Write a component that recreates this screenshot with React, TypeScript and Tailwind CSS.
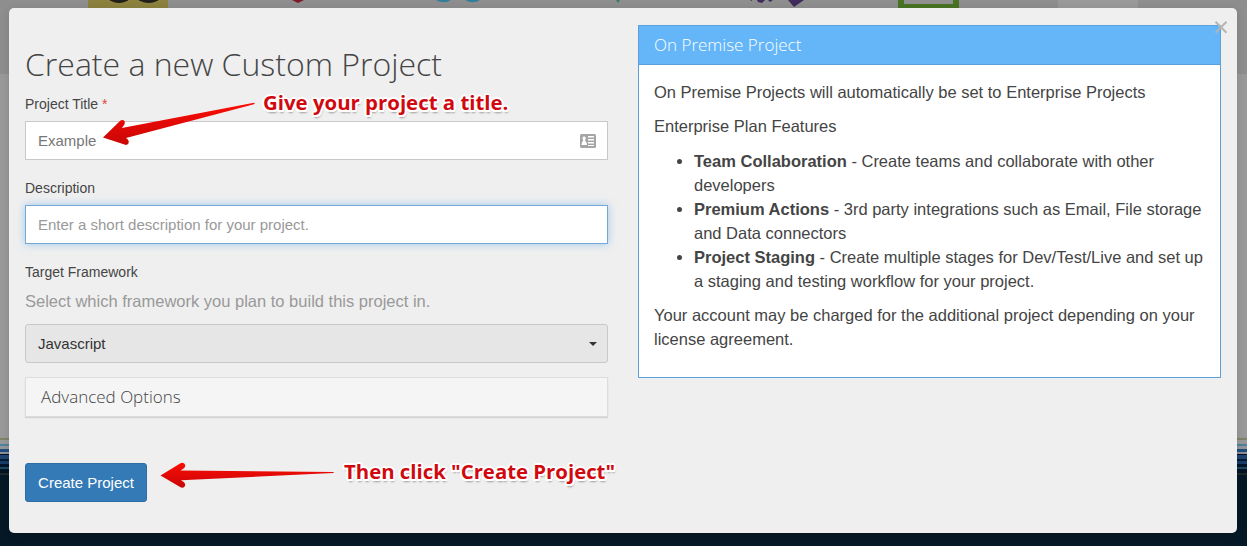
import React from "react";

const features = [
  { name: "Team Collaboration", lines: [" - Create teams and collaborate with other", "developers"] },
  { name: "Premium Actions", lines: [" - 3rd party integrations such as Email, File storage", "and Data connectors"] },
  { name: "Project Staging", lines: [" - Create multiple stages for Dev/Test/Live and set up", "a staging and testing workflow for your project."] },
];

const stripes = [
  "h-[2px] bg-[#7d8568]",
  "h-[4px] bg-[#97999a]",
  "h-[2px] bg-[#50819e]",
  "h-[3px] bg-[#93979b]",
  "h-[3px] bg-[#1f4e7d]",
  "h-[2px] bg-[#8b9197]",
  "h-[1px] bg-[#020d24]",
  "h-[4px] bg-[#1d4570]",
  "h-[2px] bg-[#031a33]",
  "h-[3px] bg-[#173d68]",
  "h-[3px] bg-[#03152b]",
  "h-[2px] bg-[#1b4a5c]",
  "h-[4px] bg-[#041424]",
  "h-[2px] bg-[#1c2b28]",
];

function Backdrop() {
  return (
    <div className="absolute inset-0 flex flex-col bg-[#051825]">
      <div className="h-[74px] bg-[#8e8e8e]" />
      <div className="h-[364px] bg-[#999999]" />
      {stripes.map((c, i) => (
        <div key={i} className={c} />
      ))}
      <svg className="absolute left-0 top-0" width="1247" height="8" viewBox="0 0 1247 8">
        <rect x="88" width="80" height="8" fill="#8c823d" />
        <path d="M110 0h18q-9 5-18 0zM139 0h19q-9 5-19 0z" fill="#22201c" stroke="#22201c" />
        <path d="M292 0h12l-6 3z" fill="#7c1a2b" />
        <path d="M436 0h15q-7 4.500-15 0zM465 0h15q-7 4.500-15 0z" fill="#307f9a" />
        <path d="M616 0h4l-2 3z" fill="#3d7c5d" />
        <path d="M750 0h2v1zM757 0h8l-3 3-4-1zM768 0h5l-3 2zM788 0h16l-10 7z" fill="#412a5c" />
        <path d="M898 0h61v8h-61z" fill="#487322" />
        <path d="M904 0h49v4h-49z" fill="#909090" />
        <rect x="1058" width="80" height="8" fill="#999" />
      </svg>
    </div>
  );
}

function Label({ children }: { children: React.ReactNode }) {
  return <div className="h-5 whitespace-nowrap text-[14px] leading-5 text-[#454545]">{children}</div>;
}

function Callout({ className, children }: { className: string; children: React.ReactNode }) {
  return (
    <div
      className={
        "absolute whitespace-nowrap font-['Open_Sans'] font-bold text-[#d1090f] [text-shadow:-2px_0_#fff,2px_0_#fff,0_-2px_#fff,0_2px_#fff,-1.5px_-1.5px_#fff,1.5px_-1.5px_#fff,-1.5px_1.5px_#fff,1.5px_1.5px_#fff,1px_3px_2px_#999] " +
        className
      }
    >
      {children}
    </div>
  );
}

function Arrows() {
  return (
    <svg className="pointer-events-none absolute left-0 top-0 z-10" width="620" height="546" viewBox="0 0 620 546">
      <defs>
        <linearGradient id="red" x1="0" y1="0" x2="0" y2="1">
          <stop offset="0" stopColor="#fb0d05" />
          <stop offset="1" stopColor="#c90606" />
        </linearGradient>
      </defs>
      <g fill="url(#red)">
        <path d="M103 137.500L120.500 120.600Q123 119 124.600 121.200Q125.600 123.300 124 125.200L121.800 128L254 102.700Q255.500 103.300 254 104.200L126 138L127.600 139.300Q129.600 141.300 128.600 143.300Q127 145.600 124.500 144.600Z" />
        <path d="M160.500 475.500L180.500 463.300Q183.500 462 185 464.500Q185.700 466.700 184 468.200L180.500 470.500L333 472Q335 472.500 333 473L181 480.200L184 482.300Q186 484.300 184.600 486.500Q183 488.500 180.500 487.300Z" />
      </g>
    </svg>
  );
}

function ProjectForm() {
  return (
    <div className="flex w-[583px] flex-col">
      <h1 className="mt-4 h-[46px] whitespace-nowrap font-['Open_Sans'] text-[32px] font-light leading-[47px] text-[#444]">
        Create a new Custom Project
      </h1>
      <div className="mt-2">
        <Label>
          Project Title <span className="text-[#e04545]">*</span>
        </Label>
      </div>
      <div className="mt-[7px] flex h-[39px] items-center justify-between border border-[#c8c8c8] bg-white pl-3 pr-[11px] text-[15px] text-[#777]">
        <span className="pt-[2px]">Example</span>
        <svg width="16" height="14" viewBox="0 0 16 14">
          <rect width="16" height="14" rx="1.500" fill="#a5a5a5" />
          <path d="M4 2.500a1.700 1.700 0 0 1 1.200 3v1.500Q7 8 7 11H1.500Q1.500 8 3 7V5.500A1.700 1.700 0 0 1 4 2.500zM8 2h6v1.500H8zM8 5h6v1.500H8zM8 8h6v1.500H8zM8 11h6v1H8z" fill="#fff" />
        </svg>
      </div>
      <div className="mt-[18px]">
        <Label>Description</Label>
      </div>
      <div className="mt-[7px] flex h-[39px] items-center border border-[#75a8d8] bg-white px-3 pt-[2px] text-[15px] text-[#999] shadow-[0_0_8px_rgba(102,175,233,0.6)]">
        Enter a short description for your project.
      </div>
      <div className="mt-[18px]">
        <Label>Target Framework</Label>
      </div>
      <p className="mt-[7px] h-6 whitespace-nowrap text-[16.500px] leading-6 text-[#999]">
        Select which framework you plan to build this project in.
      </p>
      <div className="mt-[11px] flex h-[39px] items-center justify-between rounded-[3px] border border-[#c8c8c8] bg-[#e6e6e6] pl-3 pr-[10px] text-[15px] text-[#333]">
        <span className="pt-[2px]">Javascript</span>
        <span className="h-0 w-0 border-x-4 border-t-4 border-x-transparent border-t-[#333]" />
      </div>
      <div className="mt-[14px] h-10 border border-[#ddd] bg-[#f5f5f5] pl-[15px] font-['Open_Sans'] text-[17px] font-light leading-[38px] text-[#444] shadow-[0_1px_1px_rgba(0,0,0,0.12)]">
        <span>Advanced Options</span>
      </div>
      <button className="mt-[46px] h-[39px] w-[122px] whitespace-nowrap rounded-[3px] border border-[#2e6da4] bg-[#337ab7] pt-[2px] text-[15px] text-white">
        <span>Create Project</span>
      </button>
    </div>
  );
}

function PremisePanel() {
  return (
    <div className="mt-px h-[353px] w-[583px] border border-[#5b9fdb] bg-white">
      <div className="h-[39px] border-b border-[#5b9fdb] bg-[#64b6f9] pl-[15px] font-['Open_Sans'] text-[17px] font-light leading-[38px] text-white">
        <span>On Premise Project</span>
      </div>
      <div className="whitespace-nowrap pl-[15px] pt-[15px] text-[16.500px] leading-6 text-[#444]">
        <p>On Premise Projects will automatically be set to Enterprise Projects</p>
        <p className="mt-[10px]">Enterprise Plan Features</p>
        <ul className="mt-[11px] list-disc pl-10">
          {features.map((f) => (
            <li key={f.name}>
              <b>{f.name}</b>
              {f.lines[0]}
              <br />
              {f.lines[1]}
            </li>
          ))}
        </ul>
        <p className="mt-[10px]">
          Your account may be charged for the additional project depending on your
          <br />
          license agreement.
        </p>
      </div>
    </div>
  );
}

export default function App() {
  return (
    <div className="relative h-[546px] w-[1247px] overflow-hidden pl-[9px] pt-2 font-['Liberation_Sans',sans-serif]">
      <Backdrop />
      <div className="relative flex h-[525px] w-[1228px] gap-[30px] rounded-[5px] bg-[#efefef] p-4 shadow-[0_2px_8px_rgba(0,0,0,0.12)]">
        <ProjectForm />
        <PremisePanel />
        <svg className="absolute left-[1205px] top-3" width="14" height="14" viewBox="0 0 14 14">
          <path d="M1.500 1.700l11 11M12.500 1.700l-11 11" stroke="#b5b5b5" strokeWidth="2" />
        </svg>
      </div>
      <Arrows />
      <Callout className="left-[263px] top-[88px] text-[20.400px] leading-7">Give your project a title.</Callout>
      <Callout className="left-[344px] top-[457px] text-[20.350px] leading-7">Then click "Create Project"</Callout>
    </div>
  );
}
